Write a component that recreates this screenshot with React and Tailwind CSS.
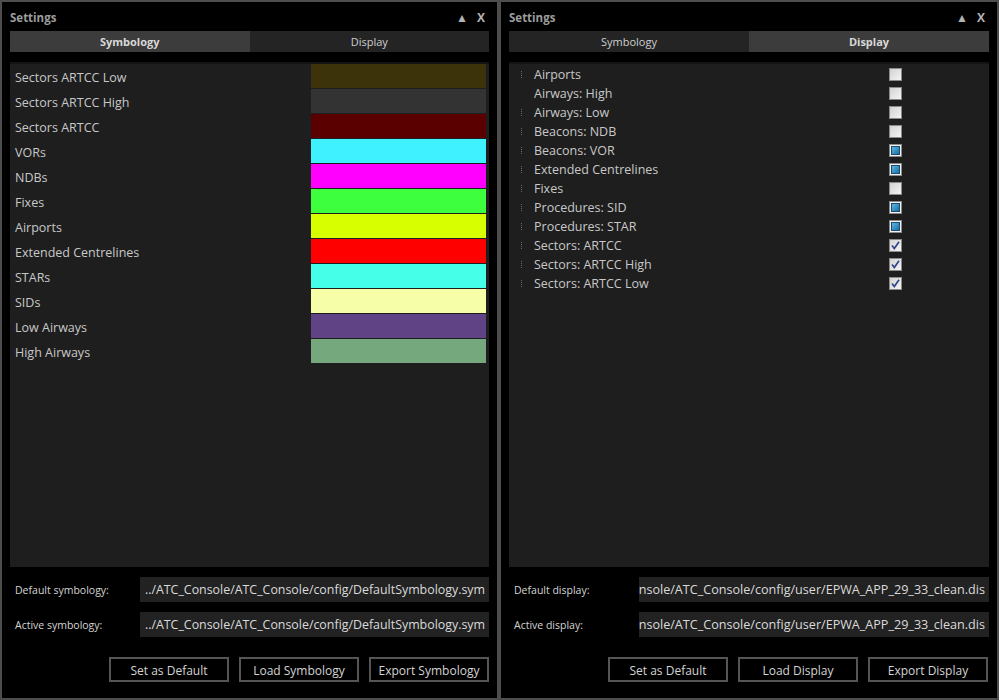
import React from "react";

const font = { fontFamily: '"Open Sans", "Noto Sans", sans-serif' };

const symbology = [
  ["Sectors ARTCC Low", "bg-[#3d330a]"],
  ["Sectors ARTCC High", "bg-[#333333]"],
  ["Sectors ARTCC", "bg-[#5a0000]"],
  ["VORs", "bg-[#3ff0ff]"],
  ["NDBs", "bg-[#ff00ff]"],
  ["Fixes", "bg-[#3dff3d]"],
  ["Airports", "bg-[#d8ff00]"],
  ["Extended Centrelines", "bg-[#ff0000]"],
  ["STARs", "bg-[#45ffe8]"],
  ["SIDs", "bg-[#f6ffa8]"],
  ["Low Airways", "bg-[#5f4384]"],
  ["High Airways", "bg-[#76a87e]"],
];

const display = [
  ["Airports", "off", true],
  ["Airways: High", "off", false],
  ["Airways: Low", "off", true],
  ["Beacons: NDB", "off", true],
  ["Beacons: VOR", "part", true],
  ["Extended Centrelines", "part", true],
  ["Fixes", "off", true],
  ["Procedures: SID", "part", true],
  ["Procedures: STAR", "part", true],
  ["Sectors: ARTCC", "on", true],
  ["Sectors: ARTCC High", "on", true],
  ["Sectors: ARTCC Low", "on", true],
];

function Check({ state }) {
  if (state === "part") {
    return (
      <div className="w-[13px] h-[13px] border border-[#8a8a8a] bg-[#f2f2f2] flex items-center justify-center">
        <div className="w-[9px] h-[9px] border border-[#1b4d6e] bg-gradient-to-br from-[#5cb6e6] to-[#1a6fa3]" />
      </div>
    );
  }
  if (state === "on") {
    return (
      <div className="w-[13px] h-[13px] border border-[#8a8a8a] bg-gradient-to-br from-[#d4d4d4] to-[#f4f4f4] flex items-center justify-center">
        <svg width="9" height="9" viewBox="0 0 9 9">
          <path d="M1 4.5 L3.3 7.5 L8 0.8" stroke="#34448a" strokeWidth="1.7" fill="none" />
        </svg>
      </div>
    );
  }
  return (
    <div className="w-[13px] h-[13px] border border-[#8a8a8a] bg-gradient-to-br from-[#cfcfcf] to-[#f6f6f6] flex items-center justify-center">
      <div className="w-[9px] h-[9px] bg-gradient-to-br from-[#d6d6d6] to-[#f0f0f0]" />
    </div>
  );
}

function Window({ width, active, children, labels, path, pathSize, buttons, btnPad }) {
  return (
    <div
      className={`${width} h-[700px] shrink-0 border-2 border-[#4d4d4d] bg-black px-[8px] flex flex-col`}
      style={font}
    >
      <div className="h-[29px] pt-[2px] flex items-center justify-between pr-[4px]">
        <span className="text-[11.5px] font-bold text-[#9c9c9c]">Settings</span>
        <div className="flex items-center gap-[9px] font-bold text-[#b4b4b4]">
          <span className="text-[12px]">▲</span>
          <span className="text-[12px]">X</span>
        </div>
      </div>
      <div className="h-[21px] flex text-[11px]">
        <div
          className={`w-[240px] pt-[2px] flex items-center justify-center ${
            active === 0 ? "bg-[#3c3c3c] font-bold text-[#d8d8d8]" : "bg-[#242424] text-[#cfcfcf]"
          }`}
        >
          Symbology
        </div>
        <div
          className={`w-[240px] pt-[2px] flex items-center justify-center ${
            active === 1 ? "bg-[#3c3c3c] font-bold text-[#d8d8d8]" : "bg-[#242424] text-[#cfcfcf]"
          }`}
        >
          Display
        </div>
      </div>
      <div className="mt-[10px] h-[505px] bg-[#1e1e1e] border-t-2 border-[#141414]">{children}</div>
      <div className="mt-[10px] flex flex-col gap-[10px]">
        {labels.map((l) => (
          <div key={l} className="flex items-center h-[25px]">
            <span className="w-[130px] pl-[5px] pt-[2px] text-[10.5px] text-[#d4d4d4]">{l}</span>
            <div
              className={`w-[350px] h-[25px] pt-[2px] bg-[#222222] flex items-center justify-end overflow-hidden whitespace-nowrap pr-[4px] ${pathSize} text-[#dadada]`}
            >
              <span className="shrink-0">{path}</span>
            </div>
          </div>
        ))}
      </div>
      <div className={`mt-[20px] flex justify-end gap-[10px] ${btnPad}`}>
        {buttons.map((b) => (
          <div
            key={b}
            className="w-[120px] h-[25px] pt-[2px] border-2 border-[#555555] bg-black flex items-center justify-center text-[12px] text-[#d4d4d4]"
          >
            {b}
          </div>
        ))}
      </div>
    </div>
  );
}

export default function App() {
  return (
    <div className="w-[999px] h-[700px] flex bg-black overflow-hidden">
      <Window
        width="w-[499px]"
        active={0}
        labels={["Default symbology:", "Active symbology:"]}
        path="../ATC_Console/ATC_Console/config/DefaultSymbology.sym"
        pathSize="text-[12.4px]"
        buttons={["Set as Default", "Load Symbology", "Export Symbology"]}
        btnPad="pr-0"
      >
        <div className="pr-[3px]">
          {symbology.map(([name, color]) => (
            <div key={name} className="h-[25px] flex items-center">
              <span className="flex-1 pl-[5px] pt-[3px] text-[12.5px] text-[#c8c8c8]">{name}</span>
              <div className={`w-[175px] h-[24px] mb-[1px] ${color}`} />
            </div>
          ))}
        </div>
      </Window>
      <Window
        width="w-[500px]"
        active={1}
        labels={["Default display:", "Active display:"]}
        path="../ATC_Console/ATC_Console/config/user/EPWA_APP_29_33_clean.dis"
        pathSize="text-[12.6px]"
        buttons={["Set as Default", "Load Display", "Export Display"]}
        btnPad="pr-[1px]"
      >
        <div className="pt-[1px]">
          {display.map(([name, state, marker]) => (
            <div key={name} className="h-[19px] flex items-center">
              <div className="w-[25px] flex justify-center">
                {marker && <div className="w-0 h-[7px] border-l border-dotted border-[#6a6a6a]" />}
              </div>
              <span className="w-[355px] pt-[2px] text-[12.5px] text-[#c8c8c8]">{name}</span>
              <Check state={state} />
            </div>
          ))}
        </div>
      </Window>
    </div>
  );
}
